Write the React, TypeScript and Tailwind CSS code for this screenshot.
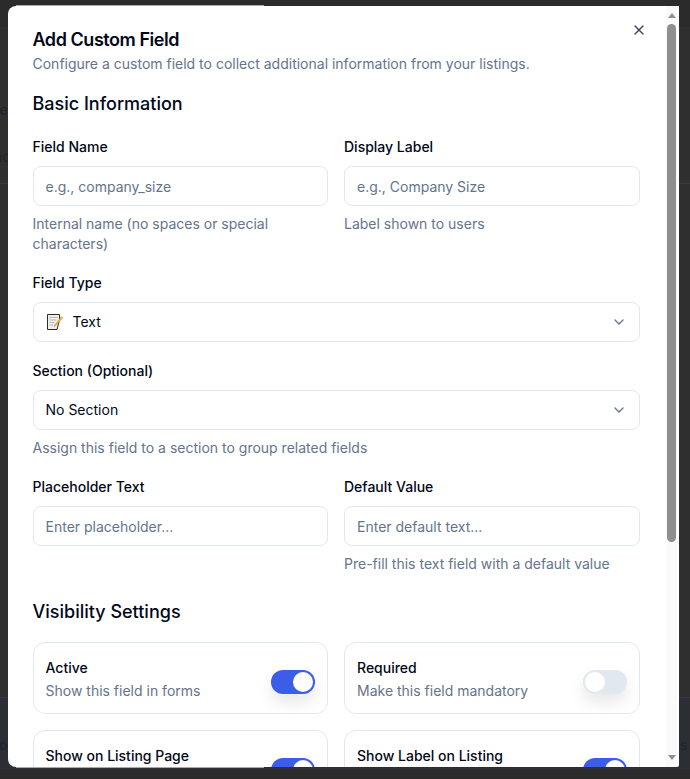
import React from "react";
import { X, ChevronDown } from "lucide-react";

function Field({ label, placeholder, help }: { label: string; placeholder: string; help?: string }) {
  return (
    <div className="min-w-0">
      <label className="block text-[14px] leading-[20px] font-medium text-[#020817] mb-[9px]">{label}</label>
      <div className="h-[40px] rounded-[8px] border border-[#e2e8f0] bg-white px-[12px] flex items-center text-[14px] text-[#64748b]">{placeholder}</div>
      {help && <p className="mt-[8px] text-[14px] leading-[20px] text-[#64748b]">{help}</p>}
    </div>
  );
}

function Select({ label, children, help }: { label: string; children: React.ReactNode; help?: string }) {
  return (
    <div>
      <label className="block text-[14px] leading-[20px] font-medium text-[#020817] mb-[9px]">{label}</label>
      <div className="h-[40px] rounded-[8px] border border-[#e2e8f0] bg-white px-[12px] flex items-center justify-between text-[14px] text-[#020817]">
        <span className="flex items-center gap-[9px] mb-[2px]">{children}</span>
        <ChevronDown className="w-[16px] h-[16px] text-[#64748b]" strokeWidth={2} />
      </div>
      {help && <p className="mt-[8px] text-[14px] leading-[20px] text-[#64748b]">{help}</p>}
    </div>
  );
}

function Toggle({ on }: { on: boolean }) {
  return (
    <div className={`mt-[8px] w-[44px] h-[24px] rounded-full flex items-center p-[2px] shadow-[0_8px_16px_rgba(15,23,42,0.1)] ${on ? "bg-[#3b5de7] justify-end" : "bg-[#e2e8f0] justify-start"}`}>
      <div className="w-[20px] h-[20px] rounded-full bg-white" />
    </div>
  );
}

function ToggleCard({ title, desc, on }: { title: string; desc: string; on: boolean }) {
  return (
    <div className="h-[72px] rounded-[12px] border border-[#e2e8f0] bg-white px-[12px] flex items-center justify-between">
      <div className="mt-[2px]">
        <div className="text-[14px] leading-[20px] font-medium text-[#020817] mb-[3px]">{title}</div>
        <div className="text-[14px] leading-[20px] text-[#64748b]">{desc}</div>
      </div>
      <Toggle on={on} />
    </div>
  );
}

function MemoIcon() {
  return (
    <svg width="18" height="18" viewBox="0 0 18 18" className="shrink-0 translate-y-[1px]">
      <path d="M1.5 1.5H13.5V7L11 16.5H1.5Z" fill="#efefec" stroke="#2b2b2b" strokeWidth="1" />
      <path d="M3.5 4.5H11.5M3.5 7H10.5M3.5 9.5H8.5M3.5 12H7" stroke="#b9b9b4" strokeWidth="1" />
      <path d="M15.5 3.5L9 11.5L8 13.5L10 12.5L16.5 5Z" fill="#f2b632" stroke="#b8871c" strokeWidth="0.4" />
    </svg>
  );
}

export default function App() {
  return (
    <div className="relative h-[779px] w-[690px] bg-[#2f2f2f] pt-[6px] pl-[8px] overflow-hidden font-['Inter',sans-serif]">
      <div className="absolute left-0 right-0 top-0 h-[27px] bg-[#2b2b2b]" />
      <div className="absolute left-0 right-0 top-[697px] h-[72px] bg-[#2d2e33] border-t border-[#3a3c44]" />
      <div className="absolute left-0 right-0 top-[769px] bottom-0 bg-[#2b2b2b]" />
      <div className="absolute left-0 top-[183px] w-full h-px bg-[#3a3a3a]" />
      <span className="absolute left-[-8px] top-[100px] text-[14px] leading-[20px] text-[#1c2431]">se</span>
      <span className="absolute left-[-6px] top-[147px] text-[14px] leading-[20px] text-[#1c2431]">nc</span>
      <span className="absolute left-[-1px] top-[735px] text-[14px] leading-[20px] text-[#1c2431]">o</span>
      <span className="absolute left-[680px] top-[735px] text-[14px] leading-[20px] text-[#1c2431]">s</span>

      <div className="relative w-[671px] h-[761px] bg-white rounded-tl-[8px] rounded-bl-[8px] rounded-br-[2px] overflow-hidden">
        <button className="absolute left-[623px] top-[16px] text-[#3f4657]">
          <X className="w-[16px] h-[16px]" strokeWidth={2} />
        </button>

        <div className="pl-[24.5px] pr-[39.5px] pt-[23px]">
          <h2 className="text-[18px] leading-[22px] font-semibold text-[#020817] tracking-[-0.45px]">Add Custom Field</h2>
          <p className="mt-[3px] text-[14px] leading-[20px] text-[#64748b]">Configure a custom field to collect additional information from your listings.</p>

          <h3 className="mt-[16px] text-[18px] leading-[28px] font-medium text-[#020817]">Basic Information</h3>

          <div className="mt-[19px] grid grid-cols-2 gap-[16px]">
            <Field label="Field Name" placeholder="e.g., company_size" help="Internal name (no spaces or special characters)" />
            <Field label="Display Label" placeholder="e.g., Company Size" help="Label shown to users" />
          </div>

          <div className="mt-[19px]">
            <Select label="Field Type"><MemoIcon /><span>Text</span></Select>
          </div>
          <div className="mt-[19px]">
            <Select label="Section (Optional)" help="Assign this field to a section to group related fields"><span>No Section</span></Select>
          </div>

          <div className="mt-[19px] grid grid-cols-2 gap-[16px]">
            <Field label="Placeholder Text" placeholder="Enter placeholder..." />
            <Field label="Default Value" placeholder="Enter default text..." help="Pre-fill this text field with a default value" />
          </div>

          <h3 className="mt-[24px] text-[18px] leading-[28px] font-medium text-[#020817]">Visibility Settings</h3>

          <div className="mt-[16px] grid grid-cols-2 gap-x-[16px] gap-y-[16px]">
            <ToggleCard title="Active" desc="Show this field in forms" on />
            <ToggleCard title="Required" desc="Make this field mandatory" on={false} />
            <ToggleCard title="Show on Listing Page" desc="Display on listing pages" on />
            <ToggleCard title="Show Label on Listing" desc="Show the field label" on />
          </div>
        </div>

        <div className="absolute right-[2px] top-0 bottom-0 w-[11px] bg-[#fafafa] flex flex-col items-center">
          <div className="mt-[7px] w-0 h-0 border-x-[4px] border-x-transparent border-b-[5px] border-b-[#8f8f8f]" />
          <div className="mt-[6px] w-[9px] h-[518px] rounded-full bg-[#8f8f8f]" />
          <div className="mt-auto mb-[7px] w-0 h-0 border-x-[4px] border-x-transparent border-t-[5px] border-t-[#8f8f8f]" />
        </div>
      </div>
      <div className="absolute left-[16px] top-[5px] w-[248px] h-px bg-[#a9a9ad]" />
      <div className="absolute left-[16px] top-[767px] w-[248px] h-px bg-[#a9a9ad]" />
    </div>
  );
}
